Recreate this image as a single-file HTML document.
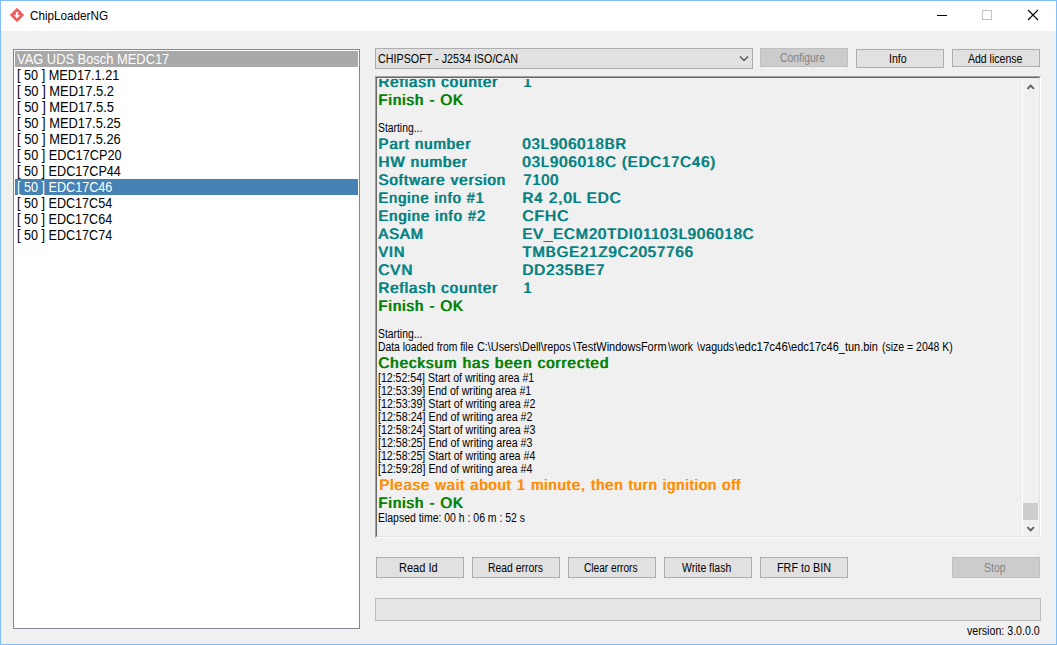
<!DOCTYPE html>
<html lang="en">
<head>
<meta charset="utf-8">
<title>ChipLoaderNG</title>
<style>
html,body{margin:0;padding:0;}
body{width:1057px;height:645px;overflow:hidden;background:#f0f0f0;font-family:"Liberation Sans",sans-serif;font-size:11px;color:#000;}
#win{position:absolute;left:0;top:0;width:1055px;height:643px;border:1px solid #81bdf8;background:#f0f0f0;overflow:hidden;}
#abs{position:absolute;left:0;top:0;width:1057px;height:645px;}
#abs *{box-sizing:border-box;}
.a{position:absolute;}
#titlebar{left:1px;top:1px;width:1055px;height:30px;background:#fff;}
.t{position:absolute;white-space:nowrap;transform-origin:0 0;line-height:1;}
.ttl{font-size:12px;color:#000;}
#list{left:13px;top:49px;width:347px;height:580px;border:1px solid #828790;background:#fff;}
.row{position:absolute;left:15px;width:343px;height:16px;}
.li{font-size:14px;}
.btn{position:absolute;border:1px solid #adadad;background:#e1e1e1;}
.btn.dis{border-color:#bfbfbf;background:#cccccc;}
.bt{font-size:12px;color:#000;}
.bt.dis{color:#838383;}
#log{left:375px;top:76px;width:666px;height:462px;background:#f0f0f0;border-top:1px solid #a0a0a0;border-left:1px solid #a0a0a0;border-bottom:1px solid #fff;border-right:1px solid #fff;}
#login{left:376px;top:77px;width:664px;height:460px;border-top:1px solid #696969;border-left:1px solid #696969;border-bottom:1px solid #e3e3e3;border-right:1px solid #e3e3e3;}
#logclip{left:377px;top:79px;width:645px;height:457px;overflow:hidden;}
.b{font-size:15px;letter-spacing:1px;text-shadow:1px 0 0 currentColor;transform-origin:0 13px;}
.teal{color:#008080;}
.green{color:#008000;}
.orange{color:#ff8c00;}
.s{font-size:12px;color:#000;}
</style>
</head>
<body>
<div id="win"></div>
<div id="abs">
<div id="titlebar" class="a"></div>
<svg class="a" style="left:9px;top:7px" width="16" height="16" viewBox="0 0 16 16">
<path d="M8 0.8 L15.2 8 L8 15.2 L0.8 8 Z" fill="#f05d5d"/>
<path d="M6.9 4.9 H9.1 V7.9 H11.3 L8 11.4 L4.7 7.9 H6.9 Z" fill="#f4fbff"/>
</svg>
<svg class="a" style="left:930px;top:1px" width="126" height="30" viewBox="0 0 126 30">
<path d="M7 14.5 H17" stroke="#000" stroke-width="1" fill="none"/>
<rect x="52.5" y="9.5" width="9" height="9" stroke="#c4c4c4" stroke-width="1" fill="none"/>
<path d="M98 9 L108 19 M108 9 L98 19" stroke="#000" stroke-width="1.1" fill="none"/>
</svg>
<div id="list" class="a"></div>
<div class="row" style="top:51px;background:#a9a9a9"></div>
<div class="row" style="top:179px;background:#4682b4"></div>
<div class="btn" style="left:375px;top:48px;width:378px;height:21px"></div>
<svg class="a" style="left:738px;top:54px" width="12" height="10" viewBox="0 0 12 10"><path d="M2 2.5 L6 6.5 L10 2.5" stroke="#404040" stroke-width="1.1" fill="none"/></svg>
<div class="btn dis" style="left:760px;top:48px;width:88px;height:19px"></div>
<div class="btn" style="left:856px;top:49px;width:88px;height:19px"></div>
<div class="btn" style="left:952px;top:49px;width:88px;height:18px"></div>
<div id="log" class="a"></div>
<div id="login" class="a"></div>
<div class="a" style="left:1022px;top:78px;width:1px;height:458px;background:#fff"></div>
<div class="a" style="left:1023px;top:503px;width:15px;height:17px;background:#cdcdcd"></div>
<svg class="a" style="left:1023px;top:78px" width="16" height="17" viewBox="0 0 16 17"><path d="M4.5 10.9 L7.7 7.7 L10.9 10.9" stroke="#606060" stroke-width="1.9" fill="none"/></svg>
<svg class="a" style="left:1023px;top:520px" width="16" height="17" viewBox="0 0 16 17"><path d="M4.5 7.1 L7.7 10.3 L10.9 7.1" stroke="#606060" stroke-width="1.9" fill="none"/></svg>
<div id="logclip" class="a">
<div class="t b teal" id="k-rc0" style="left:1.30px;top:-5.00px;transform:scale(0.9974,1.02) skewX(0.05deg);">Reflash counter</div>
<div class="t b teal" id="k-rc0v" style="left:146.41px;top:-5.00px;transform:scale(0.9582,1.02) skewX(0.05deg);">1</div>
<div class="t b green" id="k-fin0" style="left:0.67px;top:13.00px;transform:scale(0.9945,1.02) skewX(0.05deg);">Finish - OK</div>
<div class="t s" id="k-st0" style="left:1.28px;top:43.00px;transform:scaleX(0.8622);">Starting...</div>
<div class="t b teal" id="k-k0" style="left:0.86px;top:57.00px;transform:scale(0.9926,1.02) skewX(0.05deg);">Part number</div>
<div class="t b teal" id="k-v0" style="left:145.48px;top:57.00px;transform:scale(0.9785,1.02) skewX(0.05deg);">03L906018BR</div>
<div class="t b teal" id="k-k1" style="left:0.86px;top:75.00px;transform:scale(1.0040,1.02) skewX(0.05deg);">HW number</div>
<div class="t b teal" id="k-v1" style="left:145.47px;top:75.00px;transform:scale(0.9838,1.02) skewX(0.05deg);">03L906018C (EDC17C46)</div>
<div class="t b teal" id="k-k2" style="left:1.10px;top:93.00px;transform:scale(0.9998,1.02) skewX(0.05deg);">Software version</div>
<div class="t b teal" id="k-v2" style="left:146.41px;top:93.00px;transform:scale(0.9582,1.02) skewX(0.05deg);">7100</div>
<div class="t b teal" id="k-k3" style="left:0.51px;top:111.00px;transform:scale(0.9669,1.02) skewX(0.05deg);">Engine info #1</div>
<div class="t b teal" id="k-v3" style="left:145.20px;top:111.00px;transform:scale(1.0022,1.02) skewX(0.05deg);">R4 2,0L EDC</div>
<div class="t b teal" id="k-k4" style="left:1.40px;top:129.00px;transform:scale(0.9799,1.02) skewX(0.05deg);">Engine info #2</div>
<div class="t b teal" id="k-v4" style="left:145.10px;top:129.00px;transform:scale(1.0244,1.02) skewX(0.05deg);">CFHC</div>
<div class="t b teal" id="k-k5" style="left:0.74px;top:147.00px;transform:scale(0.9756,1.02) skewX(0.05deg);">ASAM</div>
<div class="t b teal" id="k-v5" style="left:145.30px;top:147.00px;transform:scale(0.9815,1.02) skewX(0.05deg);">EV_ECM20TDI01103L906018C</div>
<div class="t b teal" id="k-k6" style="left:0.80px;top:165.00px;transform:scale(0.9546,1.02) skewX(0.05deg);">VIN</div>
<div class="t b teal" id="k-v6" style="left:145.13px;top:165.00px;transform:scale(0.9868,1.02) skewX(0.05deg);">TMBGE21Z9C2057766</div>
<div class="t b teal" id="k-k7" style="left:1.22px;top:183.00px;transform:scale(1.0021,1.02) skewX(0.05deg);">CVN</div>
<div class="t b teal" id="k-v7" style="left:145.19px;top:183.00px;transform:scale(0.9985,1.02) skewX(0.05deg);">DD235BE7</div>
<div class="t b teal" id="k-k8" style="left:1.30px;top:201.00px;transform:scale(0.9974,1.02) skewX(0.05deg);">Reflash counter</div>
<div class="t b teal" id="k-v8" style="left:146.41px;top:201.00px;transform:scale(0.9582,1.02) skewX(0.05deg);">1</div>
<div class="t b green" id="k-fin1" style="left:0.67px;top:219.00px;transform:scale(0.9945,1.02) skewX(0.05deg);">Finish - OK</div>
<div class="t s" id="k-st1" style="left:1.28px;top:249.00px;transform:scaleX(0.8622);">Starting...</div>
<div class="t s" id="k-d1" style="left:1.32px;top:262.00px;transform:scaleX(0.8615);">Data loaded from file</div>
<div class="t s" id="k-d2" style="left:99.60px;top:262.00px;transform:scaleX(0.9017);">C:\Users\Dell\repos</div>
<div class="t s" id="k-d3" style="left:195.83px;top:262.00px;transform:scaleX(0.9173);">\TestWindowsForm</div>
<div class="t s" id="k-d4" style="left:290.62px;top:262.00px;transform:scaleX(0.8660);">\work</div>
<div class="t s" id="k-d5" style="left:319.86px;top:262.00px;transform:scaleX(0.8830);">\vaguds</div>
<div class="t s" id="k-d6" style="left:357.95px;top:262.00px;transform:scaleX(0.9533);">\edc17c46</div>
<div class="t s" id="k-d7" style="left:410.98px;top:262.00px;transform:scaleX(0.9170);">\edc17c46_tun.bin</div>
<div class="t s" id="k-d8" style="left:504.62px;top:262.00px;transform:scaleX(0.8731);">(size = 2048 K)</div>
<div class="t b green" id="k-chk" style="left:1.13px;top:276.00px;transform:scale(1.0017,1.02) skewX(0.05deg);">Checksum has been corrected</div>
<div class="t s" id="k-w0" style="left:1.20px;top:293.00px;transform:scaleX(0.8800);">[12:52:54] Start of writing area #1</div>
<div class="t s" id="k-w1" style="left:1.11px;top:306.00px;transform:scaleX(0.8836);">[12:53:39] End of writing area #1</div>
<div class="t s" id="k-w2" style="left:1.10px;top:319.00px;transform:scaleX(0.8873);">[12:53:39] Start of writing area #2</div>
<div class="t s" id="k-w3" style="left:1.13px;top:332.00px;transform:scaleX(0.8905);">[12:58:24] End of writing area #2</div>
<div class="t s" id="k-w4" style="left:1.11px;top:345.00px;transform:scaleX(0.8873);">[12:58:24] Start of writing area #3</div>
<div class="t s" id="k-w5" style="left:1.13px;top:358.00px;transform:scaleX(0.8905);">[12:58:25] End of writing area #3</div>
<div class="t s" id="k-w6" style="left:1.10px;top:371.00px;transform:scaleX(0.8866);">[12:58:25] Start of writing area #4</div>
<div class="t s" id="k-w7" style="left:1.16px;top:384.00px;transform:scaleX(0.8898);">[12:59:28] End of writing area #4</div>
<div class="t b orange" id="k-wait" style="left:1.96px;top:398.00px;transform:scale(0.9779,1.02) skewX(0.05deg);">Please wait about 1 minute, then turn ignition off</div>
<div class="t b green" id="k-fin2" style="left:0.67px;top:416.00px;transform:scale(0.9945,1.02) skewX(0.05deg);">Finish - OK</div>
<div class="t s" id="k-el" style="left:0.77px;top:433.00px;transform:scaleX(0.8714);">Elapsed time: 00 h : 06 m : 52 s</div>
</div>
<div class="btn" style="left:376px;top:557px;width:88px;height:21px"></div>
<div class="btn" style="left:472px;top:557px;width:88px;height:21px"></div>
<div class="btn" style="left:568px;top:557px;width:88px;height:21px"></div>
<div class="btn" style="left:664px;top:557px;width:88px;height:21px"></div>
<div class="btn" style="left:760px;top:557px;width:88px;height:21px"></div>
<div class="btn dis" style="left:952px;top:557px;width:88px;height:21px"></div>
<div class="a" style="left:375px;top:598px;width:666px;height:23px;border:1px solid #bcbcbc;background:#e6e6e6"></div>
<div class="t ttl" id="k-title" style="left:29.74px;top:10.00px;transform:scaleX(0.9750);">ChipLoaderNG</div>
<div class="t li" id="k-li0" style="left:16.74px;top:52.00px;transform:scaleX(0.9203);color:#fff;">VAG UDS Bosch MEDC17</div>
<div class="t li" id="k-li1" style="left:16.89px;top:68.00px;transform:scaleX(0.9062);">[ 50 ] MED17.1.21</div>
<div class="t li" id="k-li2" style="left:16.75px;top:84.00px;transform:scaleX(0.9231);">[ 50 ] MED17.5.2</div>
<div class="t li" id="k-li3" style="left:16.75px;top:100.00px;transform:scaleX(0.9224);">[ 50 ] MED17.5.5</div>
<div class="t li" id="k-li4" style="left:16.75px;top:116.00px;transform:scaleX(0.9191);">[ 50 ] MED17.5.25</div>
<div class="t li" id="k-li5" style="left:16.75px;top:132.00px;transform:scaleX(0.9195);">[ 50 ] MED17.5.26</div>
<div class="t li" id="k-li6" style="left:16.80px;top:148.00px;transform:scaleX(0.9075);">[ 50 ] EDC17CP20</div>
<div class="t li" id="k-li7" style="left:16.87px;top:164.00px;transform:scaleX(0.9019);">[ 50 ] EDC17CP44</div>
<div class="t li" id="k-li8" style="left:16.76px;top:180.00px;transform:scaleX(0.9005);color:#fff;">[ 50 ] EDC17C46</div>
<div class="t li" id="k-li9" style="left:16.87px;top:196.00px;transform:scaleX(0.8997);">[ 50 ] EDC17C54</div>
<div class="t li" id="k-li10" style="left:16.87px;top:212.00px;transform:scaleX(0.8997);">[ 50 ] EDC17C64</div>
<div class="t li" id="k-li11" style="left:16.87px;top:228.00px;transform:scaleX(0.8997);">[ 50 ] EDC17C74</div>
<div class="t bt" id="k-combo" style="left:377.75px;top:53.00px;transform:scaleX(0.8949);">CHIPSOFT - J2534 ISO/CAN</div>
<div class="t bt dis" id="k-cfg" style="left:780.36px;top:52.00px;transform:scaleX(0.8660);">Configure</div>
<div class="t bt" id="k-info" style="left:888.96px;top:53.00px;transform:scaleX(0.8807);">Info</div>
<div class="t bt" id="k-addlic" style="left:967.86px;top:53.00px;transform:scaleX(0.8756);">Add license</div>
<div class="t bt" id="k-readid" style="left:398.73px;top:562.00px;transform:scaleX(0.9204);">Read Id</div>
<div class="t bt" id="k-readerr" style="left:487.66px;top:562.00px;transform:scaleX(0.8675);">Read errors</div>
<div class="t bt" id="k-clrerr" style="left:583.79px;top:562.00px;transform:scaleX(0.8444);">Clear errors</div>
<div class="t bt" id="k-wflash" style="left:682.46px;top:562.00px;transform:scaleX(0.8716);">Write flash</div>
<div class="t bt" id="k-frf" style="left:777.24px;top:562.00px;transform:scaleX(0.8994);">FRF to BIN</div>
<div class="t bt dis" id="k-stop" style="left:983.66px;top:562.00px;transform:scaleX(0.8733);">Stop</div>
<div class="t bt" id="k-ver" style="left:966.71px;top:625.00px;transform:scaleX(0.8870);">version: 3.0.0.0</div>
</div>
</body>
</html>
